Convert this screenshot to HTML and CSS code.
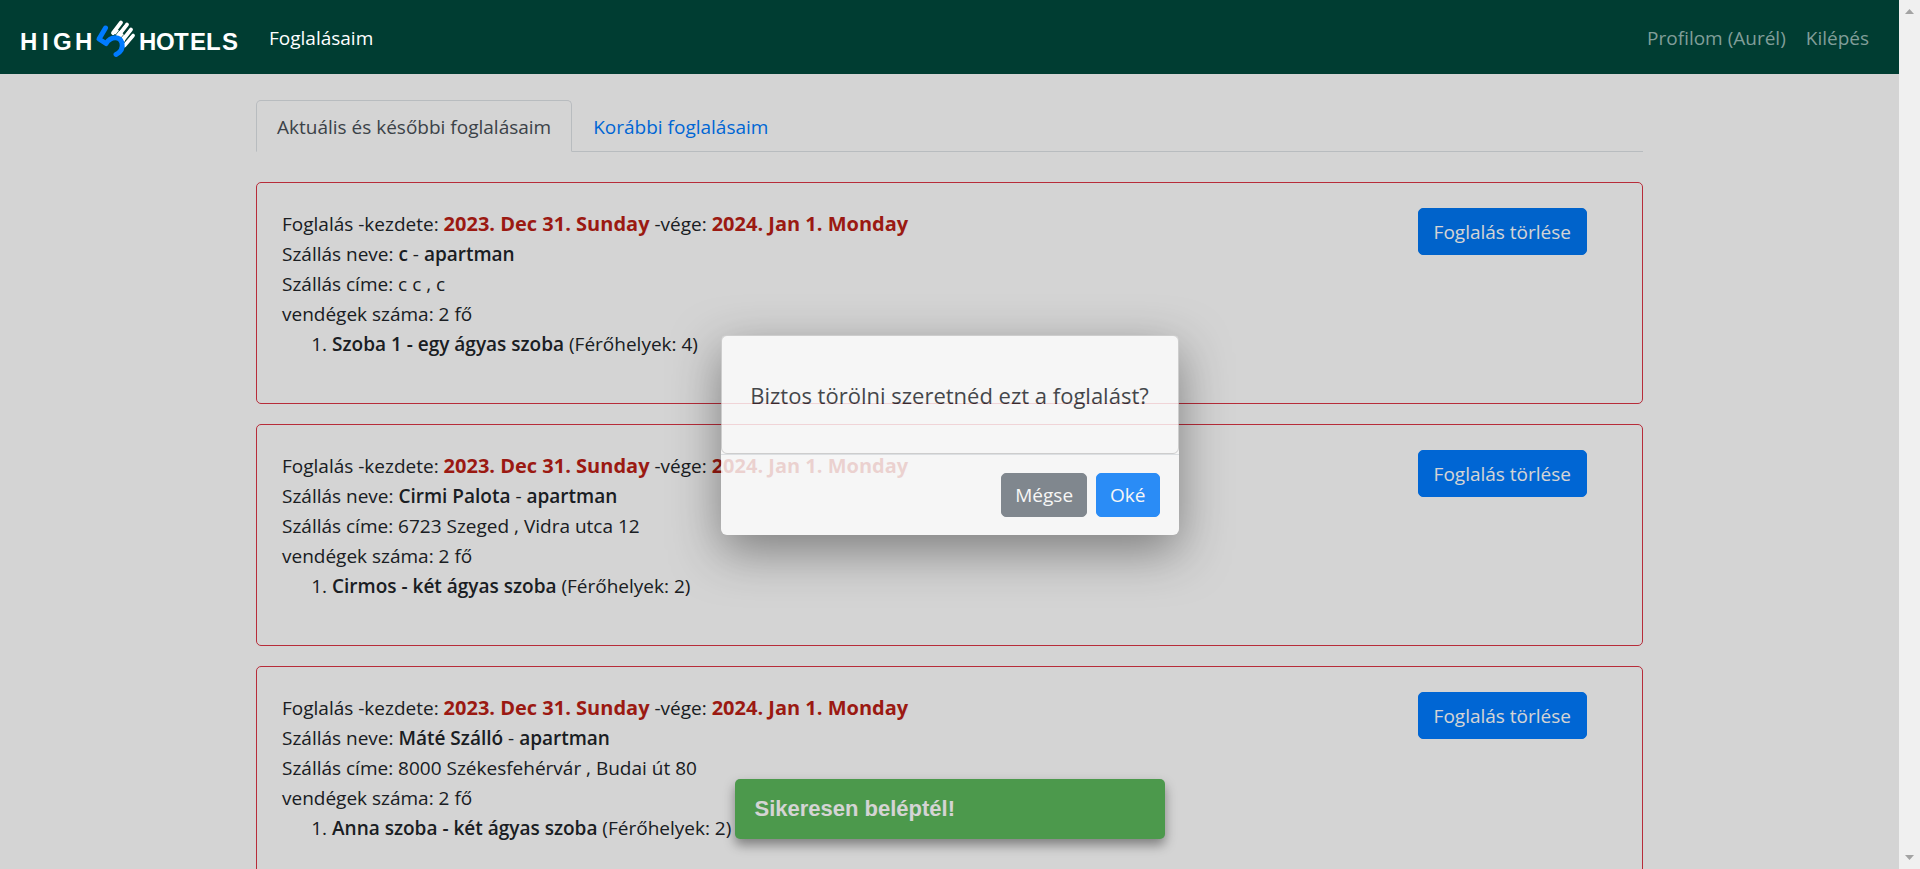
FILE: index.html
```html
<!DOCTYPE html>
<html lang="hu">
<head>
<meta charset="utf-8">
<meta name="viewport" content="width=device-width, initial-scale=1">
<title>High5 Hotels – Foglalásaim</title>
<link rel="stylesheet" href="styles.css">
</head>
<body>
<div class="page">
  <header class="navbar">
    <a class="brand" href="#" aria-label="High5 Hotels">
      <svg class="logo" width="222" height="46" viewBox="20 14 222 46">
        <g class="logo-text">
          <text x="20 42 53 75" y="50">HIGH</text>
          <text x="139 156 174 190 206 222" y="50">HOTELS</text>
        </g>
        <g fill="none" stroke-linecap="round">
          <g stroke="#fff" stroke-width="3.8">
            <path d="M121 22.5 L113 33"/>
            <path d="M127 24.5 L118 36"/>
            <path d="M131 29.5 L122 41"/>
            <path d="M133 35.5 L124.500 45.500"/>
          </g>
          <path d="M112 33 L117 29 L126 36 L124 44 L119 36 Z" fill="#fff"/>
          <g stroke="#003d32" stroke-width="0.700">
            <path d="M124.500 24 L115.500 35"/>
            <path d="M129.500 27.500 L120.500 38.500"/>
            <path d="M132.500 33 L123.500 43.500"/>
          </g>
          <path d="M105.500 28 L99 39 L106 43.500 C111 36 120 36 122 43 C123 48 121 52 116 54.500" stroke="#007bff" stroke-width="5" stroke-linejoin="round"/>
        </g>
      </svg>
    </a>
    <nav class="menu">
      <a class="menu-link active" href="#">Foglalásaim</a>
      <span class="spacer"></span>
      <a class="menu-link" href="#">Profilom (Aurél)</a>
      <a class="menu-link" href="#">Kilépés</a>
    </nav>
  </header>

  <main class="container">
    <nav class="tabs">
      <a class="tab active" href="#">Aktuális és későbbi foglalásaim</a>
      <a class="tab" href="#">Korábbi foglalásaim</a>
    </nav>

    <article class="card">
      <div class="info">
        <div>Foglalás -kezdete: <b class="date">2023. Dec 31. Sunday</b> -vége: <b class="date">2024. Jan 1. Monday</b></div>
        <div>Szállás neve: <b>c</b> - <b>apartman</b></div>
        <div>Szállás címe: c c , c</div>
        <div>vendégek száma: 2 fő</div>
        <ol class="rooms"><li><b>Szoba 1 - egy ágyas szoba</b> (Férőhelyek: 4)</li></ol>
      </div>
      <button class="btn btn-delete pressed" type="button">Foglalás törlése</button>
    </article>

    <article class="card">
      <div class="info">
        <div>Foglalás -kezdete: <b class="date">2023. Dec 31. Sunday</b> -vége: <b class="date">2024. Jan 1. Monday</b></div>
        <div>Szállás neve: <b>Cirmi Palota</b> - <b>apartman</b></div>
        <div>Szállás címe: 6723 Szeged , Vidra utca 12</div>
        <div>vendégek száma: 2 fő</div>
        <ol class="rooms"><li><b>Cirmos - két ágyas szoba</b> (Férőhelyek: 2)</li></ol>
      </div>
      <button class="btn btn-delete" type="button">Foglalás törlése</button>
    </article>

    <article class="card">
      <div class="info">
        <div>Foglalás -kezdete: <b class="date">2023. Dec 31. Sunday</b> -vége: <b class="date">2024. Jan 1. Monday</b></div>
        <div>Szállás neve: <b>Máté Szálló</b> - <b>apartman</b></div>
        <div>Szállás címe: 8000 Székesfehérvár , Budai út 80</div>
        <div>vendégek száma: 2 fő</div>
        <ol class="rooms"><li><b>Anna szoba - két ágyas szoba</b> (Férőhelyek: 2)</li></ol>
      </div>
      <button class="btn btn-delete" type="button">Foglalás törlése</button>
    </article>
  </main>

  <div class="toast" role="status">Sikeresen beléptél!</div>
  <div class="backdrop"></div>
  <div class="modal-layer">
    <section class="modal" role="dialog" aria-modal="true" aria-labelledby="question">
      <div class="modal-body"><p id="question">Biztos törölni szeretnéd ezt a foglalást?</p></div>
      <div class="modal-footer">
        <button class="btn btn-secondary" type="button">Mégse</button>
        <button class="btn" type="button">Oké</button>
      </div>
    </section>
  </div>
</div>
<div class="scrollbar" aria-hidden="true">
  <svg width="9" height="5" viewBox="0 0 9 5"><path d="M0 5 L4.500 0 L9 5 Z"/></svg>
  <svg width="9" height="5" viewBox="0 0 9 5"><path d="M0 0 L4.500 5 L9 0 Z"/></svg>
</div>
</body>
</html>
```

FILE: styles.css
```css
* { box-sizing: border-box; }

body {
  display: grid;
  grid-template-columns: minmax(0, 1fr) 21px;
  height: 100vh;
  margin: 0;
  overflow: hidden;
  background: #fff;
  color: #212529;
  font: 19px/30px "Open Sans", "Noto Sans", sans-serif;
}

a { text-decoration: none; }
b { font-weight: 600; }

.page {
  position: relative;
  height: 100vh;
  overflow: hidden;
}

/* Navigation bar */
.navbar {
  position: relative;
  z-index: 3;
  display: flex;
  align-items: center;
  gap: 17px;
  padding: 14px 20px;
  background: #003d32;
}

.brand, .logo { display: block; }

.logo-text {
  fill: #fff;
  font: bold 24px "Liberation Sans", Arial, sans-serif;
}

.menu {
  display: flex;
  flex: 1;
}

.menu-link {
  padding: 2px 10px 0;
  color: #809e99;
}

.menu-link.active { color: #fff; }
.spacer { flex: 1; }

/* Bookings */
.container {
  max-width: 1387px;
  margin: 26px auto 0;
}

.tabs {
  display: flex;
  margin-bottom: 30px;
  border-bottom: 1px solid #dee2e6;
}

.tab {
  margin-bottom: -1px;
  padding: 11px 20px 9px;
  border: 1px solid transparent;
  border-radius: 5px 5px 0 0;
  color: #007bff;
}

.tab.active {
  border-color: #dee2e6 #dee2e6 #fff;
  background: #fff;
  color: #495057;
}

.card {
  display: flex;
  align-items: flex-start;
  justify-content: space-between;
  margin-bottom: 20px;
  padding: 25px 55px 25px 25px;
  border: 1px solid #dc3545;
  border-radius: 5px;
}

.info { padding-top: 1px; }

.date {
  color: #bb1f16;
  font-size: 20px;
  font-weight: 700;
}

.rooms {
  margin: 0 0 19px;
  padding-left: 50px;
}

.btn {
  padding: 6px 13px;
  border: 1px solid #007bff;
  border-radius: 5px;
  background: #007bff;
  color: #fff;
  font: inherit;
}

.btn-delete { padding: 8px 15px 7px; }

.pressed {
  border-color: #0077f5;
  background: #0077f5;
}

.btn-secondary {
  border-color: #6c757d;
  background: #6c757d;
}

/* Overlays */
.toast {
  position: absolute;
  bottom: 30px;
  left: 50%;
  width: 430px;
  margin-left: -215px;
  padding: 15px 20px;
  border-radius: 5px;
  background: #5cb85c;
  box-shadow: 0 6px 12px rgba(0, 0, 0, .4);
  color: #fff;
  font: bold 22px/30px "Liberation Sans", Arial, sans-serif;
}

.backdrop {
  position: absolute;
  inset: 0;
  z-index: 2;
  background: rgba(0, 0, 0, .17);
}

.modal-layer {
  position: absolute;
  inset: 0;
  z-index: 4;
  display: flex;
  align-items: center;
  justify-content: center;
}

.modal {
  width: 458px;
  border-radius: 6px;
  background: #fff;
  box-shadow: 0 16px 48px rgba(0, 0, 0, .5);
  opacity: .8;
}

.modal-body {
  padding: 42px 0 41px;
  border: 1px solid rgba(0, 0, 0, .2);
  border-radius: 6px;
  font-size: 22px;
  line-height: 34px;
  text-align: center;
}

.modal-body p { margin: 0; }

.modal-footer {
  display: flex;
  justify-content: flex-end;
  gap: 9px;
  padding: 18px 19px;
  border-top: 1px solid #dee2e6;
}

/* Scroll track */
.scrollbar {
  display: flex;
  flex-direction: column;
  align-items: center;
  justify-content: space-between;
  padding: 9px 0;
  background: #f0f0f0;
  fill: #a3a3a3;
}
```
